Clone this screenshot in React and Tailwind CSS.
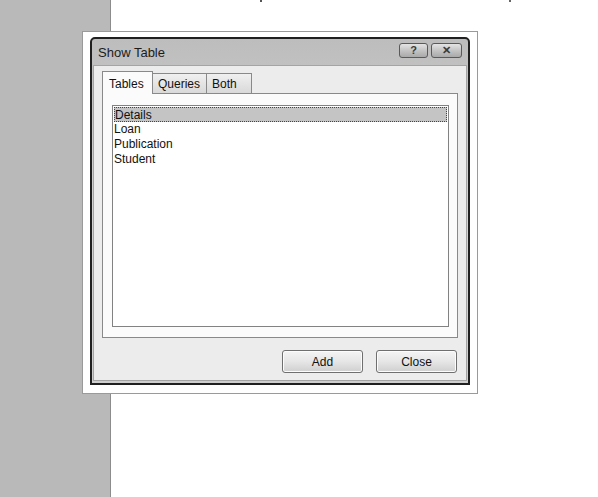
import React from 'react';

const tables = ['Details', 'Loan', 'Publication', 'Student'];

function TitleButton({ children, wide }) {
  return (
    <div
      className={`${wide ? 'w-[31px]' : 'w-[29px]'} h-[15px] rounded-[3px] border border-[#5a5a5a] bg-gradient-to-b from-[#e4e4e4] via-[#c4c4c4] to-[#a9a9a9] flex items-center justify-center text-[11px] font-bold leading-none text-[#3a3a3a]`}
    >
      {children}
    </div>
  );
}

function Tab({ label, active, width }) {
  return active ? (
    <div className="relative z-10 -mb-px h-[23px] w-[51px] border border-b-0 border-[#898989] bg-[#fbfbfb] pt-[3px] pl-[6px] text-[12px] text-[#111]">
      {label}
    </div>
  ) : (
    <div
      className={`${width} mt-[2px] h-[20px] border border-l-0 border-b-0 border-[#898989] bg-gradient-to-b from-[#f0f0f0] to-[#d9d9d9] pl-[5px] pt-[3px] text-[12px] leading-[14px] text-[#111]`}
    >
      {label}
    </div>
  );
}

function PushButton({ label }) {
  return (
    <button className="h-[23px] w-[81px] rounded-[3px] border border-[#6f6f6f] bg-gradient-to-b from-[#f4f4f4] via-[#e6e6e6] to-[#cfcfcf] text-[12px] text-[#111] shadow-[inset_0_0_0_1px_#fcfcfc]">
      {label}
    </button>
  );
}

export default function App() {
  return (
    <div
      className="relative flex h-[497px] w-[598px] overflow-hidden bg-white"
      style={{ fontFamily: '"Liberation Sans", Arial, sans-serif' }}
    >
      {/* left pane */}
      <div className="h-full w-[111px] border-r border-[#8c8c8c] bg-[#b9b9b9]" />

      {/* clipped text descenders at the top edge */}
      <span className="absolute left-[260px] top-0 h-[2px] w-[2px] bg-[#555]" />
      <span className="absolute left-[509px] top-0 h-[2px] w-[2px] bg-[#666]" />

      {/* dialog with its white frame */}
      <div className="absolute left-[82px] top-[31px] h-[363px] w-[396px] border border-[#9a9a9a] bg-white pl-[7px] pt-[5px]">
        <div className="flex h-[348px] w-[380px] flex-col rounded-t-[5px] border-2 border-[#202020] bg-gradient-to-b from-[#bdbdbd] via-[#d4d4d4] to-[#cfcfcf] px-[1px] pb-[2px]">
          {/* title bar */}
          <div className="flex h-[26px] shrink-0 items-start justify-between pl-[5px] pr-[5px]">
            <span className="pt-[6px] text-[13px] leading-[15px] text-[#1c1c1c]">Show Table</span>
            <div className="flex gap-[3px] pt-[4px]">
              <TitleButton>?</TitleButton>
              <TitleButton wide>✕</TitleButton>
            </div>
          </div>

          {/* body */}
          <div className="flex flex-1 flex-col border border-[#a4a4a4] bg-[#ececec] pl-[8px] pr-[8px] pt-[5px]">
            <div className="flex items-start">
              <Tab label="Tables" active />
              <Tab label="Queries" width="w-[54px]" />
              <Tab label="Both" width="w-[45px]" />
            </div>

            <div className="h-[245px] w-[356px] border border-[#898989] bg-[#fbfbfb] pl-[9px] pt-[11px]">
              <div className="h-[222px] w-[337px] border border-[#828282] bg-white px-px">
                {tables.map((name, i) => (
                  <div
                    key={name}
                    className={`h-[15px] text-[12px] leading-[15px] text-[#111] ${
                      i === 0 ? 'mt-px border border-dotted border-[#444] bg-[#c4c4c4] leading-[13px]' : ''
                    }`}
                  >
                    {name}
                  </div>
                ))}
              </div>
            </div>

            <div className="mt-[12px] flex justify-end gap-[13px] pr-[1px]">
              <PushButton label="Add" />
              <PushButton label="Close" />
            </div>
          </div>
        </div>
      </div>
    </div>
  );
}
